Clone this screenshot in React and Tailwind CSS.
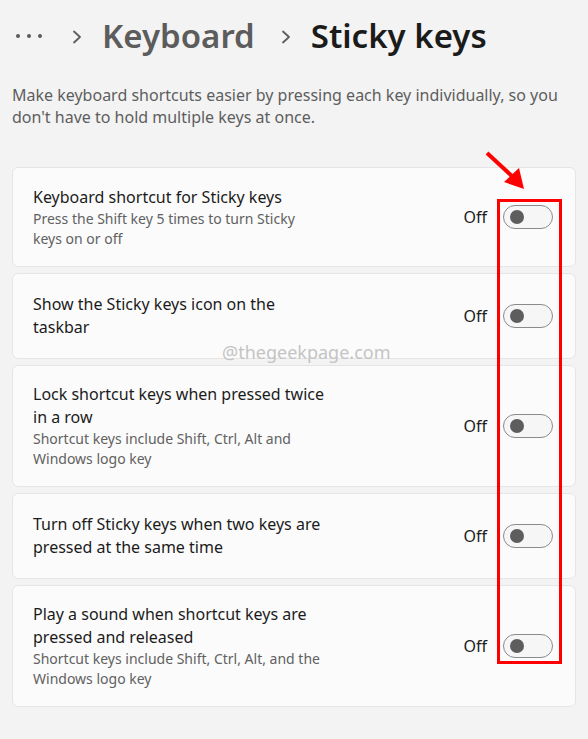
const rows = [
  { h: 'min-h-[100px]', title: ['Keyboard shortcut for Sticky keys'], sub: ['Press the Shift key 5 times to turn Sticky', 'keys on or off'] },
  { h: 'min-h-[86px]', title: ['Show the Sticky keys icon on the', 'taskbar'], sub: [] },
  { h: 'min-h-[86px]', title: ['Lock shortcut keys when pressed twice', 'in a row'], sub: ['Shortcut keys include Shift, Ctrl, Alt and', 'Windows logo key'] },
  { h: 'min-h-[86px]', title: ['Turn off Sticky keys when two keys are', 'pressed at the same time'], sub: [] },
  { h: 'min-h-[86px]', title: ['Play a sound when shortcut keys are', 'pressed and released'], sub: ['Shortcut keys include Shift, Ctrl, Alt, and the', 'Windows logo key'] },
]

function Toggle() {
  return (
    <div className="w-[50px] h-[24px] rounded-full border border-[#8a8a8a] bg-[#f6f6f6] flex items-center pl-[6px]">
      <div className="w-[14px] h-[14px] rounded-full bg-[#5d5d5d]" />
    </div>
  )
}

function Chevron({ color }) {
  return (
    <svg width="10" height="14" viewBox="0 0 10 14">
      <path d="M2 1.5 L8 7 L2 12.5" fill="none" stroke={color} strokeWidth="1.8" strokeLinecap="round" strokeLinejoin="round" />
    </svg>
  )
}

function Row({ h, title, sub }) {
  return (
    <div className={`flex items-center ${h} bg-[#fbfbfb] border border-[#e5e5e5] rounded-[6px] pl-[20px] pr-[22px] py-[17px]`}>
      <div className="flex-1">
        {title.map(t => <div key={t} className="text-[16px] leading-[23px] text-[#1b1b1b]">{t}</div>)}
        {sub.map(t => <div key={t} className="text-[14px] leading-[20px] text-[#616161]">{t}</div>)}
      </div>
      <div className="text-[16px] text-[#1b1b1b] mr-[16px]">Off</div>
      <Toggle />
    </div>
  )
}

export default function App() {
  return (
    <div className="relative w-[588px] h-[739px] bg-[#f3f3f3] overflow-hidden" style={{ fontFamily: '"Noto Sans", sans-serif' }}>
      <div className="flex items-center h-[72px] pl-[16px]">
        <div className="flex gap-[7px] items-center">
          <div className="w-[4px] h-[4px] rounded-full bg-[#5a5a5a]" />
          <div className="w-[4px] h-[4px] rounded-full bg-[#5a5a5a]" />
          <div className="w-[4px] h-[4px] rounded-full bg-[#5a5a5a]" />
        </div>
        <div className="ml-[30px] mt-[2px]"><Chevron color="#5c5c5c" /></div>
        <span className="ml-[20px] text-[33px] font-semibold text-[#5c5c5c]">Keyboard</span>
        <div className="ml-[26px] mt-[2px]"><Chevron color="#5c5c5c" /></div>
        <span className="ml-[20px] text-[33px] font-semibold text-[#1b1b1b]">Sticky keys</span>
      </div>
      <p className="px-[12px] mt-[12px] text-[16px] leading-[22px] text-[#5e5e5e]">
        Make keyboard shortcuts easier by pressing each key individually, so you don't have to hold multiple keys at once.
      </p>
      <div className="mx-[12px] mt-[39px] flex flex-col gap-[6px]">
        {rows.map((r, i) => <Row key={i} {...r} />)}
      </div>
      <div className="absolute left-[222px] top-[339px] text-[18px] text-[#c4c4c4]">@thegeekpage.com</div>
      <div className="absolute left-[497px] top-[199px] w-[65px] h-[465px] border-[3px] border-[#ff0000]" />
      <svg className="absolute left-[484px] top-[150px]" width="44" height="42" viewBox="0 0 44 42">
        <line x1="3" y1="3" x2="30" y2="28" stroke="#ff0000" strokeWidth="4" />
        <polygon points="20,32 40,39 35,18" fill="#ff0000" />
      </svg>
    </div>
  )
}
